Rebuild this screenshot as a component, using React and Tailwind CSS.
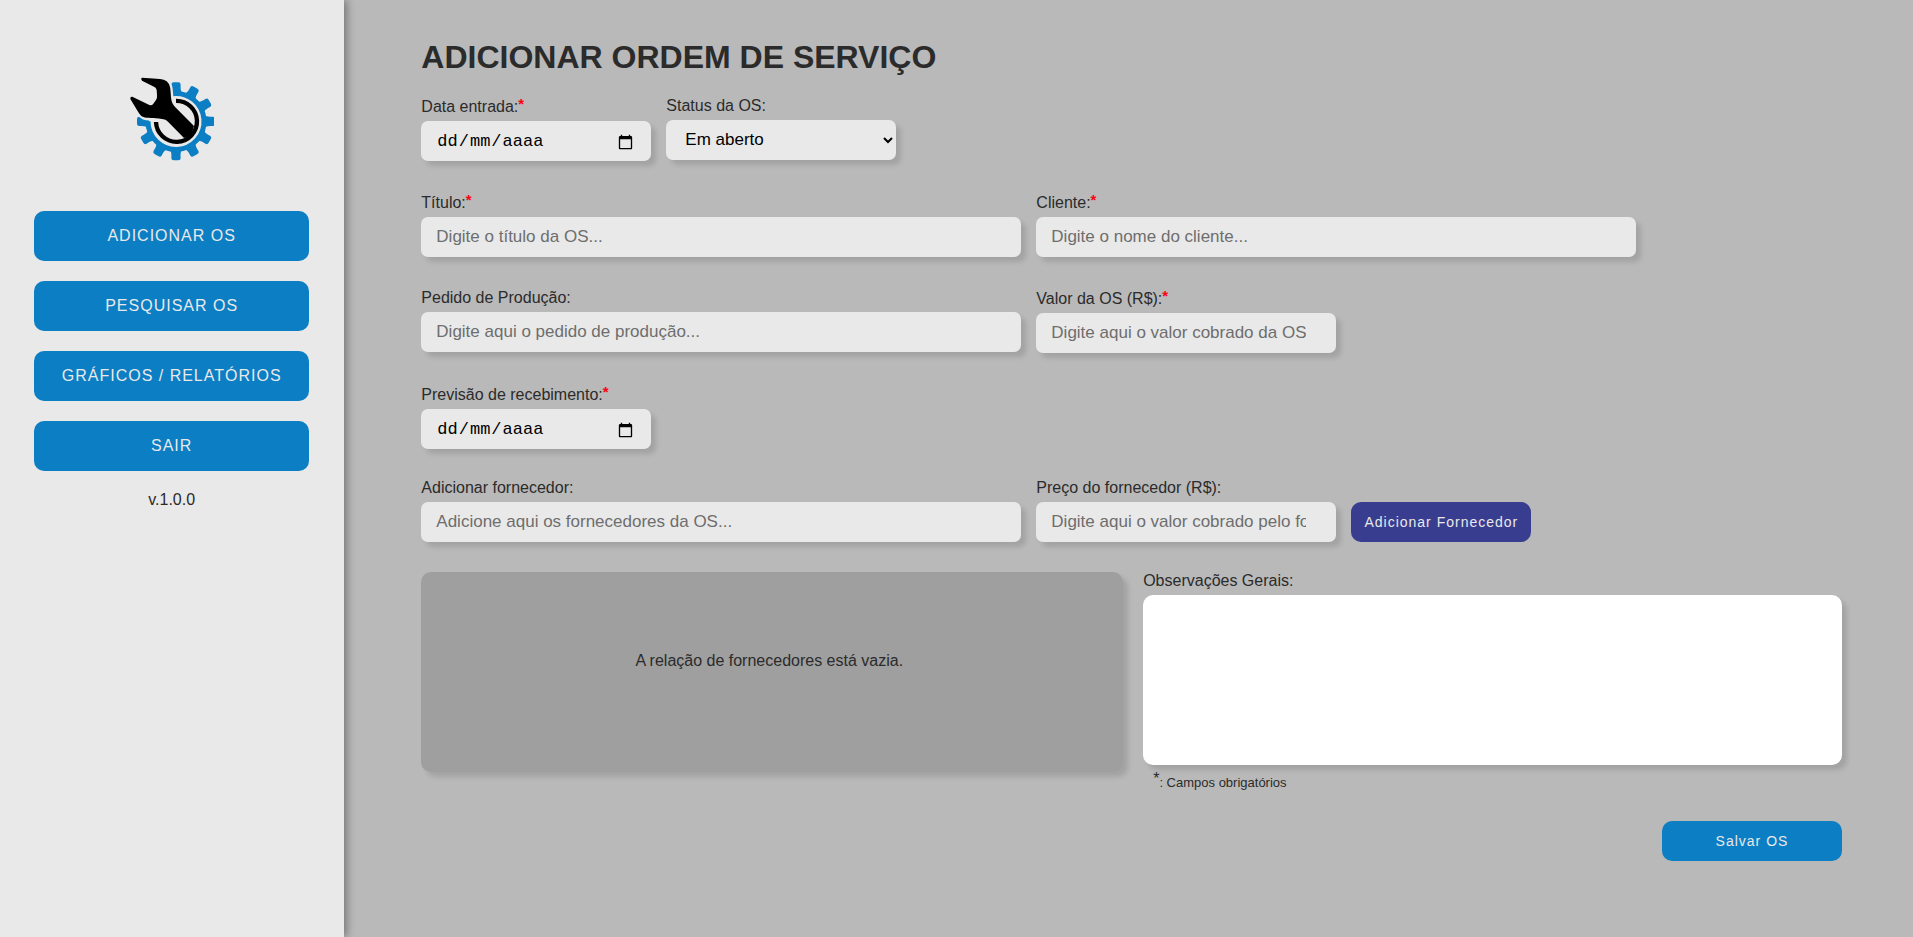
import { useState } from "react";

const CONTROL =
  "h-10 rounded-[7px] border-0 bg-[#e9e9e9] text-[17px] text-black shadow-[5px_5px_5px_rgba(0,0,0,0.12)] outline-none placeholder:text-[#6e6e6e]";

const MENU = ["ADICIONAR OS", "PESQUISAR OS", "GRÁFICOS / RELATÓRIOS", "SAIR"];

const TEETH = [0, 30, 60, 90, 120, 150, 180, 210, 240, 270];

const WRENCH =
  "M97 54 L150 58 Q175 60 180 82 C184 100 180 122 191 137 Q194 142 202 149 L252 199 L243 229 L222 235 L174 186 Q168 178 156 178 C130 174 112 177 100 172 Q92 169 86 159 L61 118 Q60 110 67 111 L118 136 Q125 139 130 132 L138 121 Q142 116 141 106 L140 91 Q139 84 132 81 L96 63 Q91 55 97 54 Z";

function Logo() {
  return (
    <svg
      viewBox="60 52 252 252"
      className="h-[84px] w-[84px]"
      role="img"
      aria-label="Ordem de serviço"
    >
      <path
        d="M187 102 A84 84 0 1 1 114 185"
        fill="none"
        stroke="#0c7ec4"
        strokeWidth="15"
      />
      {TEETH.map((angle) => (
        <path
          key={angle}
          transform={`rotate(${angle} 198 185)`}
          d="M174 104 C183 99 185 90 184 75 Q184 68 191 68 H205 Q212 68 212 75 C211 90 213 99 222 104 Z"
          fill="#0c7ec4"
        />
      ))}
      <g strokeLinejoin="round">
        <path
          d="M97 54 L150 58 Q175 60 180 82 C184 100 180 122 191 137 L226 173 L198 210 L174 186 Q168 178 156 178 C130 174 112 177 100 172 Q92 169 86 159 L61 118 L118 136 L140 91 Z"
          fill="#e9e9e9"
          stroke="#e9e9e9"
          strokeWidth="14"
        />
        <path
          d="M198 123.500 A61.500 61.500 0 1 1 138 187"
          fill="none"
          stroke="#000"
          strokeWidth="13"
        />
        <path d={WRENCH} fill="#000" />
      </g>
    </svg>
  );
}

function Field({ id, label, required, className, children }) {
  return (
    <div className={`flex flex-col ${className || ""}`}>
      <label
        htmlFor={id}
        className={required ? "h-[26px] pt-[2px] leading-5" : "h-6 leading-5"}
      >
        {label}
        {required && (
          <span className="relative -top-[3px] text-[15px] leading-none font-bold text-[#ff0011]">
            *
          </span>
        )}
      </label>
      {children}
    </div>
  );
}

function DateInput({ id }) {
  const [value, setValue] = useState("");
  const [focused, setFocused] = useState(false);
  const showHint = !value && !focused;
  return (
    <div className="grid">
      <input
        id={id}
        type="date"
        value={value}
        onChange={(e) => setValue(e.target.value)}
        onFocus={() => setFocused(true)}
        onBlur={() => setFocused(false)}
        className={`col-start-1 row-start-1 w-full px-[15px] pt-0.5 font-['Liberation_Mono',monospace] ${CONTROL} ${
          showHint ? "[&::-webkit-datetime-edit]:opacity-0" : ""
        }`}
      />
      {showHint && (
        <span
          aria-hidden="true"
          className="pointer-events-none col-start-1 row-start-1 flex gap-px self-center pt-0.5 pl-4 font-['Liberation_Mono',monospace] text-[17px] text-black"
        >
          <span>dd</span>
          <span>/</span>
          <span>mm</span>
          <span>/</span>
          <span>aaaa</span>
        </span>
      )}
    </div>
  );
}

export default function App() {
  return (
    <div className="flex min-h-screen bg-[#b9b9b9] font-['Liberation_Sans',Arial,sans-serif] text-base text-[#2b2b2b]">
      <aside className="flex w-[18%] shrink-0 flex-col items-center bg-[#e9e9e9] pt-[77px] pr-px shadow-[3px_0_8px_rgba(0,0,0,0.35)]">
        <Logo />
        <nav className="mt-[50px] flex w-4/5 flex-col gap-5">
          {MENU.map((item) => (
            <button
              key={item}
              type="button"
              className="h-[50px] cursor-pointer rounded-[10px] bg-[#0c7ec4] tracking-[1px] text-[#e9e9e9]"
            >
              {item}
            </button>
          ))}
        </nav>
        <p className="mt-[17px]">v.1.0.0</p>
      </aside>

      <main className="min-w-0 flex-1 pt-[37px] pr-[71px] pb-9 pl-[77px]">
        <h1 className="text-[32px] leading-10 font-bold">ADICIONAR ORDEM DE SERVIÇO</h1>

        <form className="mt-[18px]" onSubmit={(e) => e.preventDefault()}>
          <div className="flex flex-col gap-[30px]">
            <div className="flex items-center gap-[15px]">
              <Field id="entrada" label="Data entrada:" required className="w-[230px]">
                <DateInput id="entrada" />
              </Field>
              <Field id="status" label="Status da OS:" className="w-[230px]">
                <select id="status" className={`pr-0 pb-0.5 pl-[15px] ${CONTROL}`}>
                  <option>Em aberto</option>
                </select>
              </Field>
            </div>

            <div className="flex items-center gap-[15px]">
              <Field id="titulo" label="Título:" required className="w-[600px]">
                <input
                  id="titulo"
                  type="text"
                  placeholder="Digite o título da OS..."
                  className={`px-[15px] ${CONTROL}`}
                />
              </Field>
              <Field id="cliente" label="Cliente:" required className="w-[600px]">
                <input
                  id="cliente"
                  type="text"
                  placeholder="Digite o nome do cliente..."
                  className={`px-[15px] ${CONTROL}`}
                />
              </Field>
            </div>

            <div className="flex items-center gap-[15px]">
              <Field id="pedido" label="Pedido de Produção:" className="w-[600px]">
                <input
                  id="pedido"
                  type="text"
                  placeholder="Digite aqui o pedido de produção..."
                  className={`px-[15px] ${CONTROL}`}
                />
              </Field>
              <Field id="valor" label="Valor da OS (R$):" required className="w-[300px]">
                <input
                  id="valor"
                  type="number"
                  placeholder="Digite aqui o valor cobrado da OS"
                  className={`px-[15px] ${CONTROL}`}
                />
              </Field>
            </div>

            <Field
              id="previsao"
              label="Previsão de recebimento:"
              required
              className="w-[230px]"
            >
              <DateInput id="previsao" />
            </Field>
          </div>

          <div className="mt-[29px] flex items-end gap-[15px]">
            <Field id="fornecedor" label="Adicionar fornecedor:" className="w-[600px]">
              <input
                id="fornecedor"
                type="text"
                placeholder="Adicione aqui os fornecedores da OS..."
                className={`px-[15px] ${CONTROL}`}
              />
            </Field>
            <Field id="preco" label="Preço do fornecedor (R$):" className="w-[300px]">
              <input
                id="preco"
                type="number"
                placeholder="Digite aqui o valor cobrado pelo fornecedor"
                className={`px-[15px] ${CONTROL}`}
              />
            </Field>
            <button
              type="button"
              className="h-10 w-[180px] cursor-pointer rounded-[10px] bg-[#383d90] text-[14px] tracking-[1px] text-[#e9e9e9]"
            >
              Adicionar Fornecedor
            </button>
          </div>

          <div className="mt-[30px] grid grid-cols-[702fr_699fr] items-start gap-5">
            <section
              aria-label="Fornecedores"
              className="flex h-[200px] items-center justify-center rounded-[10px] bg-[#9f9f9f] pr-1.5 pb-[22px] shadow-[5px_5px_5px_rgba(0,0,0,0.12)]"
            >
              <p>A relação de fornecedores está vazia.</p>
            </section>
            <div className="flex flex-col">
              <label htmlFor="observacoes" className="h-[23px] leading-[18px]">
                Observações Gerais:
              </label>
              <textarea
                id="observacoes"
                className="h-[170px] resize-none rounded-[10px] bg-white p-[15px] shadow-[5px_5px_5px_rgba(0,0,0,0.12)] outline-none"
              />
              <p className="mt-2 pl-2.5 text-[13px] leading-5">
                <span className="relative -top-[3px] text-base leading-none">*</span>: Campos
                obrigatórios
              </p>
            </div>
          </div>

          <div className="mt-7 flex justify-end">
            <button
              type="submit"
              className="h-10 w-[180px] cursor-pointer rounded-[10px] bg-[#0c7ec4] text-[14px] tracking-[1px] text-[#e9e9e9]"
            >
              Salvar OS
            </button>
          </div>
        </form>
      </main>
    </div>
  );
}
